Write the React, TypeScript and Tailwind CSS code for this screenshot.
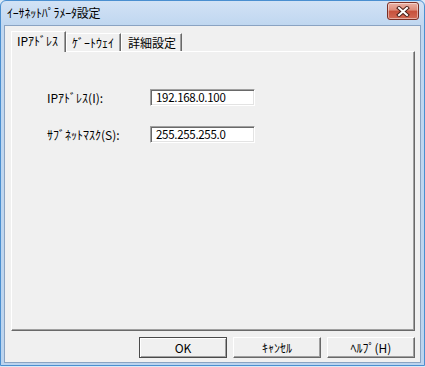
import React from "react";

function CloseBtn() {
  return (
    <div className="mt-[1px] w-[32px] h-[18px] rounded-[3px] border border-[#7a2f25] bg-[linear-gradient(180deg,#eab2a5_0%,#dd8a78_45%,#c6503b_50%,#d26a55_100%)] shadow-[inset_0_0_0_1px_rgba(255,255,255,0.45)] flex items-center justify-center">
      <svg width="14" height="11" viewBox="0 0 14 11">
        <path d="M3 2 L11 9 M11 2 L3 9" stroke="#4a1f18" strokeWidth="4" strokeLinecap="square" />
        <path d="M3 2 L11 9 M11 2 L3 9" stroke="#ffffff" strokeWidth="2" strokeLinecap="square" />
      </svg>
    </div>
  );
}

function Field({ value }: { value: string }) {
  return (
    <div className="w-[105px] h-[17px] bg-white border border-t-[#a0a0a0] border-l-[#a0a0a0] border-b-white border-r-white shadow-[inset_1px_1px_0_#696969,inset_-1px_-1px_0_#e3e3e3] flex items-center pl-[5px] text-[11.5px] leading-none font-['Noto_Sans_CJK_JP',sans-serif] tracking-[-0.3px]">
      {value}
    </div>
  );
}

function Btn({ label, def }: { label: string; def?: boolean }) {
  return (
    <div
      className={
        "w-[88px] h-[21px] flex items-center justify-center bg-[#f0f0f0] leading-none " +
        (def
          ? "border border-[#4a4a4a] shadow-[inset_1px_1px_0_#ffffff,inset_-1px_-1px_0_#a0a0a0]"
          : "border border-t-white border-l-white border-b-[#696969] border-r-[#696969] shadow-[inset_-1px_-1px_0_#a0a0a0]")
      }
    >
      {label}
    </div>
  );
}

export default function App() {
  return (
    <div className="w-[425px] h-[367px] bg-[#dbe9f6] font-['Noto_Sans_CJK_JP',sans-serif] text-[12px] text-black">
      <div className="w-[425px] h-[366px] flex flex-col rounded-t-[6px] border border-[#4a8fd0] bg-[linear-gradient(180deg,#d2e2f5_0px,#c0d7f0_24px,#bcd4ee_100%)]">
        <div className="h-[24px] shrink-0 flex items-start pl-[6px] pr-[5px]">
          <span className="flex-1 leading-none mt-[6px] tracking-[-0.2px]">ｲｰｻﾈｯﾄﾊﾟﾗﾒｰﾀ設定</span>
          <CloseBtn />
        </div>
        <div className="mx-[3px] mb-[2px] h-[338px] bg-[#f0f0f0] border border-[#8aa3c2] flex flex-col">
          <div className="pt-[5px] pl-[6px] flex flex-col">
            <div className="flex items-end h-[20px]">
              <div className="relative z-10 w-[55px] h-[21px] mb-[-1px] bg-[#f0f0f0] border-l border-t border-r border-l-white border-t-white border-r-[#696969] shadow-[inset_-1px_0_0_#a0a0a0] flex items-center pl-[5px] leading-none pb-[2px]">
                IPｱﾄﾞﾚｽ
              </div>
              <div className="w-[55px] h-[18px] bg-[#f0f0f0] border-l border-t border-r border-l-white border-t-white border-r-[#696969] shadow-[inset_-1px_0_0_#a0a0a0] flex items-center pl-[5px] leading-none">
                ｹﾞｰﾄｳｪｲ
              </div>
              <div className="w-[61px] h-[18px] bg-[#f0f0f0] border-l border-t border-r border-l-white border-t-white border-r-[#696969] shadow-[inset_-1px_0_0_#a0a0a0] flex items-center pl-[6px] leading-none">
                詳細設定
              </div>
            </div>
            <div className="w-[404px] h-[280px] border border-l-white border-t-white border-r-[#696969] border-b-[#696969] shadow-[inset_-1px_-1px_0_#a0a0a0] pt-[37px] pl-[35px]">
              <div className="grid grid-cols-[103px_105px] gap-y-[20px] items-center">
                <span className="leading-none">IPｱﾄﾞﾚｽ(I):</span>
                <Field value="192.168.0.100" />
                <span className="leading-none">ｻﾌﾞﾈｯﾄﾏｽｸ(S):</span>
                <Field value="255.255.255.0" />
              </div>
            </div>
          </div>
          <div className="mt-[6px] flex justify-end gap-[6px] pr-[5px]">
            <Btn label="OK" def />
            <Btn label="ｷｬﾝｾﾙ" />
            <Btn label="ﾍﾙﾌﾟ(H)" />
          </div>
        </div>
      </div>
    </div>
  );
}
